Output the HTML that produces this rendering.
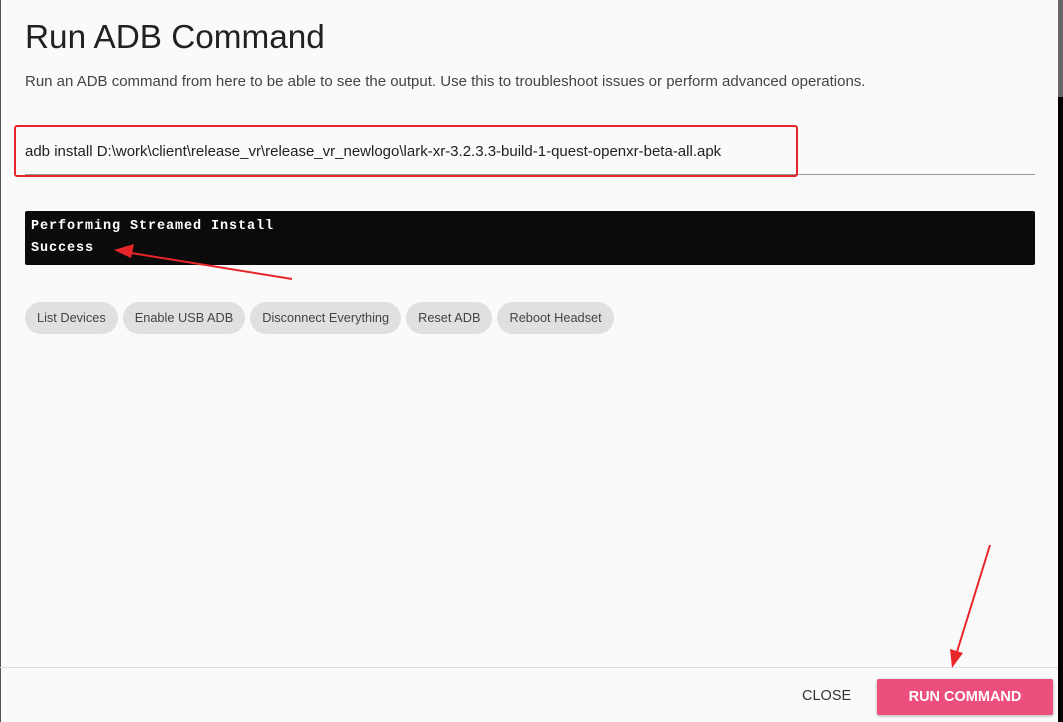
<!DOCTYPE html>
<html><head><meta charset="utf-8"><style>
body{margin:0;width:1063px;height:722px;overflow:hidden;background:#fafafa;font-family:"Liberation Sans",sans-serif;position:relative}
.l{position:absolute;left:0;top:0;width:1px;height:722px;background:#555}
.r1{position:absolute;left:1058px;top:0;width:5px;height:97px;background:#666}
.r2{position:absolute;left:1058px;top:97px;width:5px;height:625px;background:#000}
h1{position:absolute;left:25px;top:19px;margin:0;font-weight:400;font-size:33.3px;color:#212121}
.sub{position:absolute;left:25px;top:73px;font-size:15px;color:#444}
.inp{position:absolute;left:25px;top:143px;font-size:15px;color:#222}
.ul{position:absolute;left:25px;top:174px;width:1010px;height:1px;background:#999}
.red{position:absolute;left:14px;top:125px;width:780px;height:48px;border:2px solid #e8262a;border-radius:3px}
.term{position:absolute;left:25px;top:211px;width:1010px;height:54px;background:#0b0b0b;border-radius:2px;color:#fff;font-family:"Liberation Mono",monospace;font-weight:bold;font-size:13.5px;letter-spacing:0.9px;line-height:22px;padding:5px 6px;box-sizing:border-box}
.chips{position:absolute;left:25px;top:302px;display:flex;gap:5px}
.chip{background:#e0e0e0;border-radius:16px;height:32px;line-height:32px;padding:0 12px;font-size:12.75px;color:#444}
.ft{position:absolute;left:0;top:667px;width:1058px;height:1px;background:#ddd}
.close{position:absolute;left:802px;top:688px;font-size:14.5px;color:#333}
.run{position:absolute;left:877px;top:679px;width:176px;height:36px;background:#ec4f7c;border-radius:2px;color:#fff;font-size:14.5px;font-weight:bold;line-height:36px;text-align:center;box-shadow:0 1px 3px rgba(0,0,0,.3)}
svg{position:absolute;left:0;top:0}
</style></head><body>
<div class="l"></div><div class="r1"></div><div class="r2"></div>
<h1>Run ADB Command</h1>
<div class="sub">Run an ADB command from here to be able to see the output. Use this to troubleshoot issues or perform advanced operations.</div>
<div class="inp">adb install D:\work\client\release_vr\release_vr_newlogo\lark-xr-3.2.3.3-build-1-quest-openxr-beta-all.apk</div>
<div class="ul"></div>
<div class="red"></div>
<div class="term">Performing Streamed Install<br>Success</div>
<div class="chips"><div class="chip">List Devices</div><div class="chip">Enable USB ADB</div><div class="chip">Disconnect Everything</div><div class="chip">Reset ADB</div><div class="chip">Reboot Headset</div></div>
<div class="ft"></div>
<div class="close">CLOSE</div>
<div class="run">RUN COMMAND</div>
<svg width="1063" height="722">
<line x1="292" y1="279" x2="125" y2="252" stroke="#e8262a" stroke-width="2"/>
<polygon points="114,250 134,244 131,258" fill="#e8262a"/>
<line x1="990" y1="545" x2="956" y2="655" stroke="#e8262a" stroke-width="2"/>
<polygon points="952,668 950,649 963,653" fill="#e8262a"/>
</svg>
</body></html>
